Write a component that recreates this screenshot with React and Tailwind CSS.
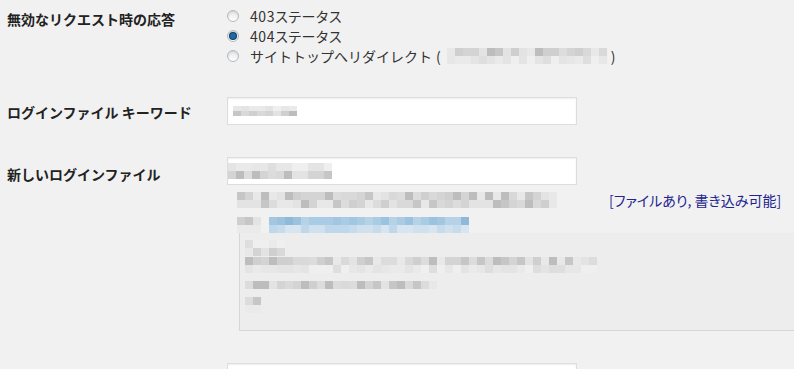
import React from "react";

const grays = ["bg-[#d9d9d9]", "bg-[#cfcfcf]", "bg-[#c6c6c6]", "bg-[#e3e3e3]", "bg-[#bdbdbd]", "bg-[#d4d4d4]", "bg-[#e8e8e8]", "bg-[#dcdcdc]"];
const pales = ["bg-[#e4e4e4]", "bg-[#eaeaea]", "bg-[#dedede]", "bg-[#efefef]", "bg-[#e7e7e7]"];
const blues = ["bg-[#a9cbe3]", "bg-[#9cc2de]", "bg-[#b6d2e7]", "bg-[#8fb9d9]", "bg-[#a3c7e1]"];
const paleBlues = ["bg-[#c6dcec]", "bg-[#cfe1ee]", "bg-[#bed7ea]", "bg-[#d6e5f0]"];

// deterministic pick so the blur looks the same every run
function pick(list, seed, i) {
  const n = Math.abs(Math.sin(seed * 97.13 + i * 12.9898) * 43758.5453);
  return list[Math.floor((n - Math.floor(n)) * list.length)];
}

function Mosaic({ cols, rows, seed, cell = "w-2 h-2", palettes }) {
  return (
    <div className="flex flex-col shrink-0">
      {Array.from({ length: rows }).map((_, r) => (
        <div key={r} className="flex">
          {Array.from({ length: cols }).map((_, c) => (
            <div key={c} className={`${cell} ${pick(palettes[r % palettes.length], seed + r, c)}`} />
          ))}
        </div>
      ))}
    </div>
  );
}

function Radio({ checked }) {
  return (
    <span className="w-3 h-3 rounded-full border border-[#b4b9be] bg-gradient-to-b from-[#e6e6e6] to-white shadow-[inset_0_1px_2px_rgba(0,0,0,0.1)] flex items-center justify-center shrink-0">
      {checked && <span className="w-[6px] h-[6px] rounded-full bg-[#1e6aa8] ring-1 ring-[#0f3d63]" />}
    </span>
  );
}

function TextInput({ children }) {
  return (
    <div className="w-[350px] h-[28px] bg-white border border-[#dddddd] shadow-[inset_0_1px_2px_rgba(0,0,0,0.07)] flex items-center">
      {children}
    </div>
  );
}

export default function App() {
  return (
    <div
      className="w-[794px] h-[369px] overflow-hidden bg-[#f1f1f1] text-[14px] text-[#333333]"
      style={{ fontFamily: "'Noto Sans CJK JP', 'Noto Sans', sans-serif" }}
    >
      {/* 無効なリクエスト */}
      <div className="flex">
        <div className="w-[227px] pl-[7px] pt-[9px] leading-[20px] font-bold text-[#222222]">無効なリクエスト時の応答</div>
        <div className="pt-[6px] leading-[20px]">
          <label className="flex items-center h-[20px] gap-[11px]">
            <Radio />
            <span className="[font-feature-settings:'palt'] tracking-[0.6px]">403ステータス</span>
          </label>
          <label className="flex items-center h-[20px] gap-[11px]">
            <Radio checked />
            <span className="[font-feature-settings:'palt'] tracking-[0.6px]">404ステータス</span>
          </label>
          <label className="flex items-center h-[20px] gap-[11px]">
            <Radio />
            <span className="flex items-center">
              サイトトップへリダイレクト
              <span className="ml-[4px] mr-[6px]">(</span>
              <Mosaic cols={20} rows={2} seed={3} palettes={[grays, pales]} />
              <span className="ml-[4px]">)</span>
            </span>
          </label>
        </div>
      </div>

      {/* キーワード */}
      <div className="flex items-start mt-[31px]">
        <div className="w-[227px] pl-[7px] pt-[5px] leading-[20px] font-bold text-[#222222]">ログインファイル キーワード</div>
        <TextInput>
          <div className="ml-[5px]">
            <Mosaic cols={8} rows={2} seed={11} cell="w-2 h-[5px]" palettes={[pales, grays]} />
          </div>
        </TextInput>
      </div>

      {/* 新しいログインファイル */}
      <div className="flex items-start mt-[32px]">
        <div className="w-[227px] pl-[7px] pt-[7px] leading-[20px] font-bold text-[#222222]">新しいログインファイル</div>
        <div className="flex-1">
          <TextInput>
            <Mosaic cols={13} rows={2} seed={21} palettes={[pales, grays]} />
          </TextInput>

          <div className="flex items-center mt-[7px] ml-[10px]">
            <Mosaic cols={40} rows={2} seed={31} palettes={[grays, grays]} />
            <span className="ml-[52px] text-[14px] leading-[16px] text-[#23238e] [font-feature-settings:'palt']">[ファイルあり, 書き込み可能]</span>
          </div>

          <div className="flex items-start mt-[9px] ml-[10px]">
            <Mosaic cols={3} rows={2} seed={41} palettes={[grays, pales]} />
            <div className="ml-[8px]">
              <Mosaic cols={25} rows={2} seed={51} palettes={[blues, paleBlues]} />
            </div>
          </div>

          <div className="ml-[12px] h-[98px] bg-[#ededed] border-l border-b border-[#d6d6d6] pl-[5px] pt-[7px] flex flex-col">
            <Mosaic cols={5} rows={2} seed={61} palettes={[pales, grays]} />
            <div className="mt-[1px]">
              <Mosaic cols={44} rows={2} seed={71} palettes={[grays, pales]} />
            </div>
            <div className="mt-[8px]">
              <Mosaic cols={24} rows={1} seed={81} palettes={[grays]} />
            </div>
            <div className="mt-[8px]">
              <Mosaic cols={2} rows={2} seed={91} palettes={[grays, pales]} />
            </div>
          </div>
        </div>
      </div>

      {/* 次の行 */}
      <div className="flex items-start mt-[32px]">
        <div className="w-[227px]" />
        <TextInput />
      </div>
    </div>
  );
}
